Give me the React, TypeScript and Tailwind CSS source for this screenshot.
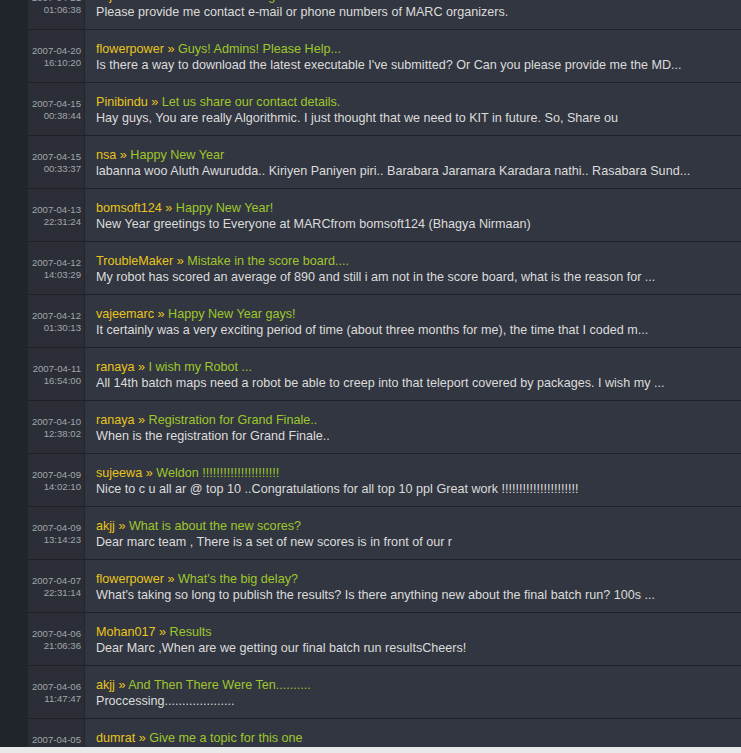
const posts = [
  { date: "2007-04-21", time: "01:06:38", name: "sujeewa", title: "Contact details of organizers", body: "Please provide me contact e-mail or phone numbers of MARC organizers." },
  { date: "2007-04-20", time: "16:10:20", name: "flowerpower", title: "Guys! Admins! Please Help...", body: "Is there a way to download the latest executable I've submitted? Or Can you please provide me the MD..." },
  { date: "2007-04-15", time: "00:38:44", name: "Pinibindu", title: "Let us share our contact details.", body: "Hay guys, You are really Algorithmic. I just thought that we need to KIT in future. So, Share ou" },
  { date: "2007-04-15", time: "00:33:37", name: "nsa", title: "Happy New Year", body: "labanna woo Aluth Awurudda.. Kiriyen Paniyen piri.. Barabara Jaramara Karadara nathi.. Rasabara Sund..." },
  { date: "2007-04-13", time: "22:31:24", name: "bomsoft124", title: "Happy New Year!", body: "New Year greetings to Everyone at MARCfrom bomsoft124 (Bhagya Nirmaan)" },
  { date: "2007-04-12", time: "14:03:29", name: "TroubleMaker", title: "Mistake in the score board....", body: "My robot has scored an average of 890 and still i am not in the score board, what is the reason for ..." },
  { date: "2007-04-12", time: "01:30:13", name: "vajeemarc", title: "Happy New Year gays!", body: "It certainly was a very exciting period of time (about three months for me), the time that I coded m..." },
  { date: "2007-04-11", time: "16:54:00", name: "ranaya", title: "I wish my Robot ...", body: "All 14th batch maps need a robot be able to creep into that teleport covered by packages. I wish my ..." },
  { date: "2007-04-10", time: "12:38:02", name: "ranaya", title: "Registration for Grand Finale..", body: "When is the registration for Grand Finale.." },
  { date: "2007-04-09", time: "14:02:10", name: "sujeewa", title: "Weldon !!!!!!!!!!!!!!!!!!!!!!", body: "Nice to c u all ar @ top 10 ..Congratulations for all top 10 ppl Great work !!!!!!!!!!!!!!!!!!!!!!" },
  { date: "2007-04-09", time: "13:14:23", name: "akjj", title: "What is about the new scores?", body: "Dear marc team , There is a set of new scores is in front of our r" },
  { date: "2007-04-07", time: "22:31:14", name: "flowerpower", title: "What's the big delay?", body: "What's taking so long to publish the results? Is there anything new about the final batch run? 100s ..." },
  { date: "2007-04-06", time: "21:06:36", name: "Mohan017", title: "Results", body: "Dear Marc ,When are we getting our final batch run resultsCheers!" },
  { date: "2007-04-06", time: "11:47:47", name: "akjj", title: "And Then There Were Ten..........", body: "Proccessing...................." },
  { date: "2007-04-05", time: "15:47:59", name: "dumrat", title: "Give me a topic for this one", body: "Ah.. well the WebAdmin has announced that they will not take in any more submissions. So, anyone out..." },
];

export default function App() {
  return (
    <div className="h-[753px] w-[741px] flex flex-col overflow-hidden bg-[#20252b] font-['Liberation_Sans',Arial,sans-serif]">
      <div className="flex-1 flex overflow-hidden">
        {/* left rail */}
        <div className="w-[28px] shrink-0 bg-[#20252b]" />

        <div className="flex-1 overflow-hidden">
          <div className="mt-[-23.3px]">
            {posts.map((p, i) => (
              <div
                key={i}
                className="h-[53.05px] flex border-b border-[#1e2126] shadow-[inset_0_1px_0_#3c404a]"
              >
                <div className="w-[57px] shrink-0 bg-[#2b2e36] border-r border-[#22252b] pt-[15px] pr-[3px] text-right text-[9.6px] leading-[12px] text-[#a2a6ab]">
                  <div>{p.date}</div>
                  <div>{p.time}</div>
                </div>
                <div className="flex-1 min-w-0 bg-[#323640] pl-[11px] pt-[11px] text-[12.6px] leading-[16px] whitespace-nowrap overflow-hidden">
                  <div>
                    <span className="text-[#e8c51c]">{p.name}</span>
                    <span className="text-[#e8c51c]"> » </span>
                    <span className="text-[#9ec72c]">{p.title}</span>
                  </div>
                  <div className="text-[#dcdcdc]">{p.body}</div>
                </div>
              </div>
            ))}
          </div>
        </div>
      </div>
      {/* bottom strip */}
      <div className="h-[6px] shrink-0 bg-[#e9e9e9]" />
    </div>
  );
}
